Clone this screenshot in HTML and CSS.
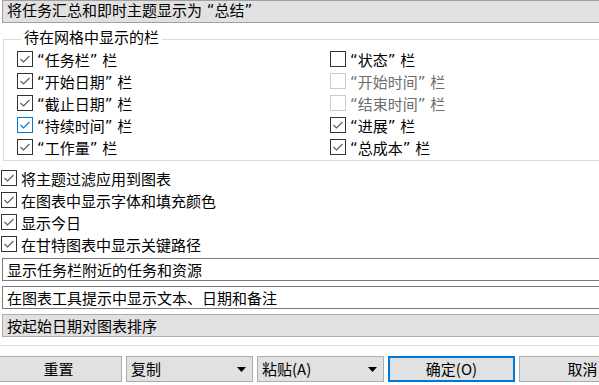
FILE: index.html
```html
<!DOCTYPE html>
<html lang="zh-CN">

<head>
  <meta charset="UTF-8" />
  <title>甘特图选项</title>
  <link rel="stylesheet" href="styles.css">
</head>

<body>
  <div class="summary-bar">将任务汇总和即时主题显示为 “总结”</div>

  <fieldset class="columns">
    <legend>待在网格中显示的栏</legend>
    <div class="col-grid">
      <label class="check"><span class="box on"></span>“任务栏” 栏</label>
      <label class="check"><span class="box"></span>“状态” 栏</label>
      <label class="check"><span class="box on"></span>“开始日期” 栏</label>
      <label class="check disabled"><span class="box"></span>“开始时间” 栏</label>
      <label class="check"><span class="box on"></span>“截止日期” 栏</label>
      <label class="check disabled"><span class="box"></span>“结束时间” 栏</label>
      <label class="check hover"><span class="box on"></span>“持续时间” 栏</label>
      <label class="check"><span class="box on"></span>“进展” 栏</label>
      <label class="check"><span class="box on"></span>“工作量” 栏</label>
      <label class="check"><span class="box on"></span>“总成本” 栏</label>
    </div>
  </fieldset>

  <div class="options">
    <label class="check"><span class="box on"></span>将主题过滤应用到图表</label>
    <label class="check"><span class="box on"></span>在图表中显示字体和填充颜色</label>
    <label class="check"><span class="box on"></span>显示今日</label>
    <label class="check"><span class="box on"></span>在甘特图表中显示关键路径</label>
  </div>

  <div class="field">显示任务栏附近的任务和资源</div>
  <div class="field">在图表工具提示中显示文本、日期和备注</div>
  <div class="field field-gray">按起始日期对图表排序</div>

  <div class="sep"></div>

  <div class="buttons">
    <button class="btn">重置</button>
    <button class="btn drop">复制<svg width="9" height="5" viewBox="0 0 9 5"><polygon points="0,0 9,0 4.5,5" fill="#000"/></svg></button>
    <button class="btn drop">粘贴(A)<svg width="9" height="5" viewBox="0 0 9 5"><polygon points="0,0 9,0 4.5,5" fill="#000"/></svg></button>
    <button class="btn primary">确定(O)</button>
    <button class="btn">取消</button>
  </div>

  <script>
    // draw the check marks into every ticked box
    document.querySelectorAll('.box.on').forEach(function (box) {
      box.innerHTML = '<svg width="14" height="14" viewBox="0 0 14 14"><path d="M2.5 7 L5.5 10 L11.5 4" fill="none" stroke="currentColor" stroke-width="1.1"/></svg>';
    });
  </script>
</body>

</html>
```

FILE: styles.css
```css
/* Base */
body {
  margin: 0;
  width: 599px;
  height: 385px;
  overflow: hidden;
  font-family: "Noto Sans CJK SC", "Noto Sans", sans-serif;
  font-size: 15px;
  color: #000;
  background-color: #fff;
}

/* narrow latin quotes, CJK from the fallback */
.summary-bar,
.check {
  font-family: "DejaVu Sans", "Noto Sans CJK SC", sans-serif;
}

/* Summary header bar */
.summary-bar {
  margin: 0 -10px 0 2px;
  height: 21px;
  line-height: 21px;
  padding-left: 4px;
  border: 1px solid #a0a0a0;
  background-color: #e1e1e1;
  white-space: nowrap;
}

/* Grid columns group */
.columns {
  margin: 6px -10px 0 3px;
  padding: 0 0 2px 13px;
  border: 1px solid #dcdcdc;
  min-width: 0;
}

.columns legend {
  margin-left: 4px;
  padding: 0 3px 4px;
  line-height: 16px;
}

.col-grid {
  display: grid;
  grid-template-columns: 313px 1fr;
  margin-top: -1px;
}

/* Checkbox rows */
.check {
  display: flex;
  align-items: center;
  gap: 4px;
  height: 22px;
  white-space: nowrap;
}

.box {
  width: 16px;
  height: 16px;
  box-sizing: border-box;
  border: 1px solid #333;
  background-color: #fff;
  color: #5a5a5a;
  display: flex;
  align-items: center;
  justify-content: center;
  flex: none;
}

.check.hover .box {
  border-color: #0078d7;
  color: #0078d7;
}

.check.disabled {
  color: #6d6d6d;
}

.check.disabled .box {
  border-color: #cccccc;
}

.options {
  margin: 6px 0 0 1px;
}

/* Text fields */
.field {
  margin: 3px -10px 0 2px;
  height: 21px;
  line-height: 21px;
  padding-left: 4px;
  border: 1px solid #7a7a7a;
  white-space: nowrap;
}

.field + .field {
  margin-top: 5px;
}

.field-gray {
  background-color: #e1e1e1;
  border-color: #adadad;
}

.sep {
  margin-top: 8px;
  height: 1px;
  background-color: #dcdcdc;
}

/* Dialog buttons */
.buttons {
  display: flex;
  gap: 4px;
  margin: 10px 0 0 -5px;
}

.btn {
  flex: none;
  width: 127px;
  height: 26px;
  padding: 0;
  border: 1px solid #adadad;
  background-color: #e1e1e1;
  font-family: inherit;
  font-size: 15px;
  line-height: 22px;
  color: #000;
}

.btn.drop {
  display: flex;
  align-items: center;
  justify-content: space-between;
  padding: 0 6px 0 4px;
  text-align: left;
}

.btn.primary {
  border: 2px solid #0078d7;
}
```
